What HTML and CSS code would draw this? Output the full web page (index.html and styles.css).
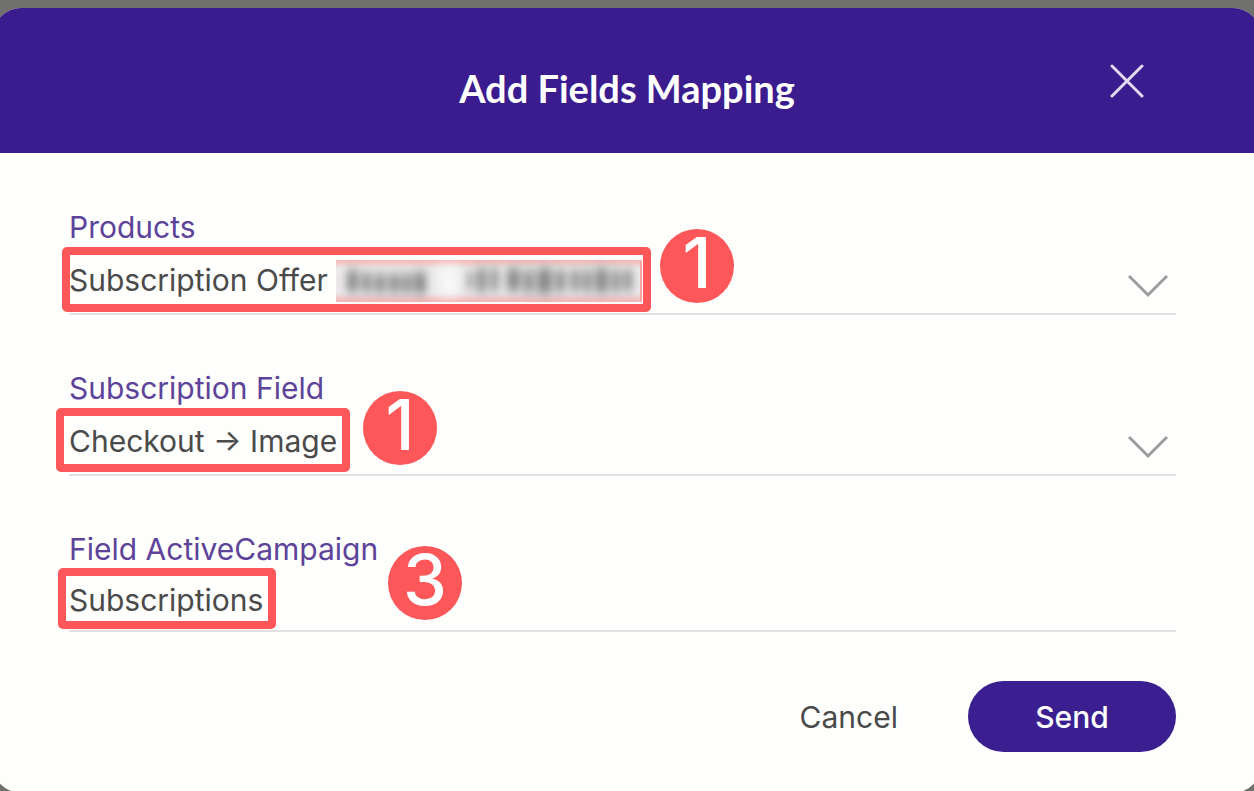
FILE: index.html
```html
<!DOCTYPE html>
<html lang="en">
<head>
<meta charset="utf-8">
<meta name="viewport" content="width=device-width, initial-scale=1">
<title>Add Fields Mapping</title>
<link rel="stylesheet" href="styles.css">
</head>
<body>
<section class="modal" role="dialog" aria-labelledby="modal-title">
  <header class="modal-header">
    <h1 class="modal-title" id="modal-title">Add Fields Mapping</h1>
    <button class="close" type="button" aria-label="Close">
      <svg width="34" height="34" viewBox="0 0 34 34" fill="none" stroke="currentColor" stroke-width="3" stroke-linecap="round"><path d="M2 2 32 32M32 2 2 32"/></svg>
    </button>
  </header>
  <form class="modal-body">
    <div class="field">
      <label class="label" for="products">Products</label>
      <div class="control">
        <select class="value" id="products"><option>Subscription Offer</option></select>
        <svg class="chevron" width="40" height="24" viewBox="0 0 40 24" fill="none" stroke="currentColor" stroke-width="3"><path d="M1 2 20 21 39 2"/></svg>
        <svg class="redaction" width="308" height="44" viewBox="0 0 308 44" aria-hidden="true">
          <defs>
            <filter id="soft" x="-10%" y="-50%" width="120%" height="200%"><feGaussianBlur stdDeviation="4 6"/></filter>
            <linearGradient id="tint" x1="0" y1="0" x2="0" y2="1">
              <stop offset="0" stop-color="#f9b6b6"/><stop offset=".2" stop-color="#ebe9e9"/><stop offset=".78" stop-color="#ebe9e9"/><stop offset="1" stop-color="#f6b4b4"/>
            </linearGradient>
          </defs>
          <rect width="308" height="44" fill="#fff"/>
          <rect x="1" y="1" width="306" height="42" fill="url(#tint)"/>
          <g filter="url(#soft)">
            <path d="M104 8h20v28h-20z" fill="#f8f8f8"/>
            <path fill="#888" d="M12 11h11v22H12zM27 14h9v19h-9zM40 15h10v19H40zM54 15h10v19H54zM67 15h9v19h-9zM79 13h12v22H79zM132 13h5v17h-5zM142 9h9v24h-9zM156 9h7v23h-7zM172 9h13v23h-13zM189 11h9v23h-9zM202 9h15v26h-15zM221 11h9v22h-9zM236 11h8v21h-8zM248 11h8v22h-8zM260 9h13v25h-13zM277 11h8v22h-8zM289 11h8v21h-8z"/>
          </g>
          <path d="M306 2v40" stroke="#f7a5a5" stroke-width="2"/>
        </svg>
        <span class="frame frame-products"></span>
        <span class="badge badge-products">1</span>
      </div>
    </div>
    <div class="field">
      <label class="label" for="subscription">Subscription Field</label>
      <div class="control">
        <select class="value" id="subscription"><option>Checkout → Image</option></select>
        <svg class="chevron" width="40" height="24" viewBox="0 0 40 24" fill="none" stroke="currentColor" stroke-width="3"><path d="M1 2 20 21 39 2"/></svg>
        <span class="frame frame-subscription"></span>
        <span class="badge badge-subscription">1</span>
      </div>
    </div>
    <div class="field">
      <label class="label" for="campaign">Field ActiveCampaign</label>
      <div class="control control-text">
        <input class="value" id="campaign" type="text" value="Subscriptions">
        <span class="frame frame-campaign"></span>
        <span class="badge badge-campaign">3</span>
      </div>
    </div>
    <div class="actions">
      <button class="button cancel" type="button">Cancel</button>
      <button class="button send" type="submit">Send</button>
    </div>
  </form>
</section>
</body>
</html>
```
FILE: styles.css
```css
* { box-sizing: border-box; }

body {
  margin: 0;
  padding-top: 8px;
  overflow: hidden;
  background: #70706f;
  font-family: Inter, "Liberation Sans", sans-serif;
}

.modal {
  margin: 0 -7px;
  border-radius: 28px;
  overflow: hidden;
  background: #fefefd;
}

.modal-header {
  display: grid;
  grid-template-columns: 1fr auto 1fr;
  align-items: start;
  padding: 56px 117px 40px;
  background: #3b1c8e;
  color: #fff;
}

.modal-title {
  grid-column: 2;
  margin: 0;
  font: 700 38px/49px Lato, sans-serif;
}

.close {
  justify-self: end;
  padding: 0;
  border: 0;
  background: none;
  color: #e2d9f3;
}

.close svg { display: block; }

.modal-body {
  display: flex;
  flex-direction: column;
  gap: 55px;
  padding: 56px 85px 41px 76px;
}

.label {
  display: block;
  color: #5d4399;
  font-size: 30px;
  line-height: 36px;
}

.control {
  position: relative;
  display: flex;
  align-items: center;
  height: 70px;
  border-bottom: 2px solid #e2e2e4;
}

.control-text { height: 65px; }

.value {
  flex: 1;
  min-width: 0;
  height: 100%;
  padding: 2px 0 0;
  border: 0;
  outline: 0;
  appearance: none;
  background: none;
  color: #4a4a4a;
  font: 400 30px/36px Inter, "Liberation Sans", sans-serif;
}

.chevron {
  position: absolute;
  right: 8px;
  bottom: 15px;
  color: #9c9c9e;
  pointer-events: none;
}

.redaction {
  position: absolute;
  left: 266px;
  top: 14px;
}

.frame {
  position: absolute;
  border: 8px solid #fd5759;
  border-radius: 5px;
  pointer-events: none;
}

.frame-products { left: -7px; top: 2px; width: 589px; height: 65px; }
.frame-subscription { left: -13px; top: 2px; width: 294px; height: 64px; }
.frame-campaign { left: -11px; top: 1px; width: 218px; height: 61px; }

.badge {
  position: absolute;
  width: 74px;
  height: 74px;
  border-radius: 50%;
  background: #fd5759;
  color: #fff;
  font-size: 70px;
  font-weight: 500;
  line-height: 68px;
  text-align: center;
}

.badge-products { left: 591px; top: -16px; }
.badge-subscription { left: 294px; top: -15px; }
.badge-campaign { left: 319px; top: -21px; }

.actions {
  display: flex;
  justify-content: flex-end;
  align-items: center;
  gap: 38px;
  margin-top: -6px;
}

.button {
  border: 0;
  font: 400 30px/36px Inter, "Liberation Sans", sans-serif;
}

.cancel {
  padding: 16px 32px;
  background: none;
  color: #4a4a4a;
}

.send {
  width: 208px;
  height: 71px;
  border-radius: 36px;
  background: #3b1f90;
  color: #fff;
  font-weight: 500;
}
```
